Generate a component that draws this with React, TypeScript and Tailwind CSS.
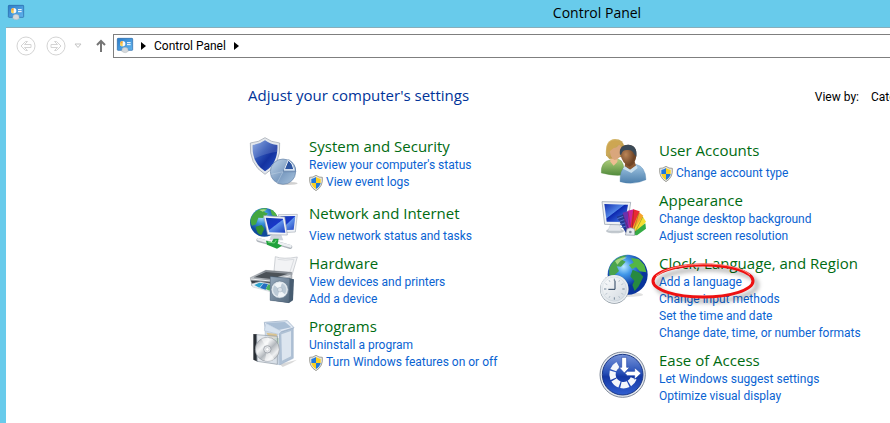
import type { ReactNode } from "react";

const iconClass = "size-12 shrink-0 overflow-visible -mb-1";

const ShieldIcon = () => (
  <svg viewBox="0 0 42 48" className="h-4 w-[14px] shrink-0" aria-hidden="true">
    <path d="M21 1 Q30 8 40 7 Q43 34 21 47 Q-1 34 2 7 Q12 8 21 1Z" fill="#e9e9e3" stroke="#77776f" strokeWidth="2" />
    <path d="M21 6 Q14 11 7 12 L7 24 H21Z" fill="#1f78dc" />
    <path d="M21 6 Q28 11 35 12 L35 24 H21Z" fill="#f9cf22" />
    <path d="M7 24 H21 V42 Q9 35 7 24Z" fill="#f9cf22" />
    <path d="M35 24 H21 V42 Q33 35 35 24Z" fill="#1f78dc" />
  </svg>
);

const PanelIcon = () => (
  <svg viewBox="0 0 48 48" className="size-4 shrink-0 overflow-visible" aria-hidden="true">
    <defs>
      <linearGradient id="panel" x1="0" y1="0" x2="1" y2="1">
        <stop offset="0" stopColor="#2b7cc9" />
        <stop offset="1" stopColor="#62b5ee" />
      </linearGradient>
    </defs>
    <rect x="1" y="1" width="46" height="36" rx="2" fill="url(#panel)" stroke="#2463a4" strokeWidth="2" />
    <circle cx="17" cy="17" r="8" fill="#f6f8fa" />
    <path d="M17 17 V9 A8 8 0 0 0 9 17Z" fill="#f4a62a" />
    <path d="M17 17 H9 A8 8 0 0 0 17 25Z" fill="#f7d057" />
    <path d="M30 14 H41 M30 20 H41" stroke="#fff" strokeWidth="3" />
    <path d="M16 31 Q24 25 32 31 L34 40 Q25 49 14 40Z" fill="#d5d9dc" stroke="#a4a9ad" strokeWidth="1" />
  </svg>
);

const SecurityIcon = () => (
  <svg viewBox="27 24 144 144" className={iconClass} aria-hidden="true">
    <defs>
      <linearGradient id="sec-shield" x1="0" y1="0" x2="1" y2="1">
        <stop offset="0" stopColor="#7c9ddd" />
        <stop offset="0.4" stopColor="#2a50b4" />
        <stop offset="0.6" stopColor="#1432a0" />
        <stop offset="1" stopColor="#2a56c6" />
      </linearGradient>
      <linearGradient id="sec-pie" x1="0" y1="0" x2="1" y2="1">
        <stop offset="0" stopColor="#c5d8ea" />
        <stop offset="0.55" stopColor="#7d9dc2" />
        <stop offset="1" stopColor="#a9c5df" />
      </linearGradient>
    </defs>
    <ellipse cx="142" cy="163" rx="31" ry="5" fill="#000" opacity="0.18" />
    <path d="M75 26 Q93 40 119 42 Q124 106 75 136 Q26 106 31 42 Q57 40 75 26Z" fill="#e3e7ec" stroke="#969da8" strokeWidth="2" />
    <path d="M75 34 Q91 46 112 48 Q115 102 75 127 Q35 102 38 48 Q59 46 75 34Z" fill="url(#sec-shield)" />
    <path d="M75 34 Q91 46 112 48 L111 68 Q76 72 39 91 Q36 72 38 48 Q59 46 75 34Z" fill="#fff" opacity="0.14" />
    <circle cx="129" cy="128" r="38" fill="url(#sec-pie)" stroke="#6885a9" strokeWidth="2" />
    <path d="M129 128 L146 92 Q168 105 167 128Z" fill="#a9c0da" stroke="#54749e" strokeWidth="2" />
    <path d="M133 122 L145 93 Q158 103 162 122Z" fill="#2d55a0" stroke="#eef4fa" strokeWidth="3" />
    <path d="M129 128 L112 161 M129 128 L93 136" stroke="#d9e5f0" strokeWidth="1" />
  </svg>
);

const NetworkIcon = () => (
  <svg viewBox="27 18 144 144" className={iconClass} aria-hidden="true">
    <defs>
      <radialGradient id="net-globe" cx="0.4" cy="0.3">
        <stop offset="0" stopColor="#b6e6ff" />
        <stop offset="0.5" stopColor="#3890d8" />
        <stop offset="1" stopColor="#104a9c" />
      </radialGradient>
      <linearGradient id="net-screen" x1="0" y1="0" x2="1" y2="1">
        <stop offset="0" stopColor="#143ab0" />
        <stop offset="0.48" stopColor="#1937c8" />
        <stop offset="0.52" stopColor="#5f92ea" />
        <stop offset="1" stopColor="#1c3ec0" />
      </linearGradient>
    </defs>
    <circle cx="73" cy="85" r="43" fill="url(#net-globe)" />
    <path d="M38 63 Q54 40 82 43 L72 53 L84 59 L68 72 L55 71 L48 91 L36 95 Q26 80 38 63Z" fill="#43a642" />
    <path d="M91 46 Q107 53 112 68 L96 64Z" fill="#51b242" />
    <path d="M47 98 L65 93 L73 104 L64 123 Q50 120 47 98Z" fill="#329133" />
    <path d="M58 48 Q70 44 81 47 L68 53Z" fill="#d5f2a8" opacity="0.7" />
    <path d="M115 62 L172 61 L166 114 L127 116Z" fill="#eef1f5" stroke="#a9b0bb" strokeWidth="2" />
    <path d="M121 67 L166 66 L161 107 L130 109Z" fill="url(#net-screen)" />
    <path d="M94 122 L123 121 L130 139 H88Z" fill="#ced4dc" />
    <path d="M71 65 L134 69 L142 123 L83 122Z" fill="#f2f4f7" stroke="#a0a8b5" strokeWidth="2" />
    <path d="M77 71 L129 74 L136 116 L88 115Z" fill="url(#net-screen)" />
    <path d="M55 138 L91 148 M115 148 L151 159" stroke="#aeb4bb" strokeWidth="12" strokeLinecap="round" />
    <path d="M55 136 L91 146 M115 147 L151 157" stroke="#eceff2" strokeWidth="8" strokeLinecap="round" />
    <path d="M78 140 L95 144 L101 134 L116 134 L113 149 L126 155 L111 164 L81 152Z" fill="#21a13c" />
    <path d="M84 144 L103 147 L109 138" fill="none" stroke="#79dc81" strokeWidth="3" />
  </svg>
);

const HardwareIcon = () => (
  <svg viewBox="27 15 144 144" className={iconClass} aria-hidden="true">
    <defs>
      <linearGradient id="hw-body" x1="0" y1="0" x2="0" y2="1">
        <stop offset="0" stopColor="#777d84" />
        <stop offset="0.5" stopColor="#c3c8cd" />
        <stop offset="1" stopColor="#50565d" />
      </linearGradient>
      <linearGradient id="hw-speaker" x1="0" y1="0" x2="1" y2="1">
        <stop offset="0" stopColor="#97a9bc" />
        <stop offset="1" stopColor="#53687c" />
      </linearGradient>
    </defs>
    <path d="M106 23 Q130 32 172 24 L156 78 L102 66Z" fill="#f2f3f5" stroke="#b9bec4" strokeWidth="2" />
    <path d="M113 31 Q136 36 162 31 L150 68" fill="none" stroke="#dadde1" strokeWidth="3" />
    <path d="M31 86 L77 64 L155 70 L156 88 L91 105 L33 98Z" fill="url(#hw-body)" stroke="#5b6269" strokeWidth="1" />
    <path d="M41 85 L78 69 L144 74 L94 90Z" fill="#4c5258" />
    <path d="M32 90 L91 96 L151 80" fill="none" stroke="#eef0f2" strokeWidth="3" />
    <path d="M34 95 L93 101 L91 122 L35 110Z" fill="#363d45" />
    <path d="M34 104 L61 98 L97 105 L91 128 L38 114Z" fill="#e8edf2" stroke="#aeb5bd" strokeWidth="1" />
    <path d="M43 108 L58 101 L70 103 L58 116Z" fill="#29a2cd" />
    <path d="M60 117 L71 103 L84 105 L77 122Z" fill="#256ec2" />
    <path d="M77 120 L85 106 L93 107 L89 125Z" fill="#48b25c" />
    <path d="M91 82 L149 88 L162 91 L159 154 L147 162 L90 154Z" fill="#475c70" />
    <path d="M91 83 L149 88 L147 161 L90 154Z" fill="url(#hw-speaker)" stroke="#495e72" strokeWidth="1" />
    <circle cx="119" cy="122" r="26" fill="#dfe6ec" stroke="#62778b" strokeWidth="2" />
    <circle cx="119" cy="122" r="20" fill="#bccad6" />
    <path d="M119 122 L103 108 A21 21 0 0 1 126 102Z M119 122 L136 137 A21 21 0 0 1 113 142Z" fill="#f1f5f8" />
    <circle cx="120" cy="122" r="7" fill="#dbe3ea" stroke="#8496a7" strokeWidth="1" />
  </svg>
);

const ProgramsIcon = () => (
  <svg viewBox="27 9 144 144" className={iconClass} aria-hidden="true">
    <defs>
      <linearGradient id="prg-disc" x1="0" y1="0" x2="1" y2="1">
        <stop offset="0" stopColor="#9a9fa5" />
        <stop offset="0.35" stopColor="#f5f6f7" />
        <stop offset="0.55" stopColor="#b3b8bd" />
        <stop offset="0.75" stopColor="#f0f1f2" />
        <stop offset="1" stopColor="#8f959b" />
      </linearGradient>
    </defs>
    <path d="M119 151 L171 137 L155 147 L128 159Z" fill="#000" opacity="0.15" />
    <path d="M75 42 L112 48 L118 152 L76 143Z" fill="#cedae8" stroke="#93a7bd" strokeWidth="1" />
    <path d="M117 55 L160 42 L160 133 L119 153Z" fill="#afc1d5" stroke="#8199b5" strokeWidth="1" />
    <path d="M73 25 L142 20 L162 41 L117 55 L76 48Z" fill="#e2eaf4" stroke="#8fa5be" strokeWidth="2" />
    <path d="M76 26 L135 24 L154 40 L116 48Z" fill="#a9bed5" />
    <path d="M78 28 L125 52 L116 61 L73 50Z" fill="#d7e3f0" stroke="#9db1c7" strokeWidth="1" />
    <path d="M124 61 L153 51 V127 L126 140Z" fill="#dce5ef" />
    <path d="M79 56 L110 60 L115 88 L97 87Z" fill="#d9c391" />
    <path d="M103 71 L115 72 V103 L103 105Z" fill="#8ab68f" />
    <path d="M40 60 L51 61 L53 143 L40 137Z" fill="#292e34" />
    <path d="M50 62 L112 67 L112 151 L51 142Z" fill="#dce2e8" fillOpacity="0.75" stroke="#8e98a3" strokeWidth="2" />
    <circle cx="82" cy="106" r="36" fill="url(#prg-disc)" stroke="#9298a0" strokeWidth="2" />
    <path d="M82 106 L64 75 A36 36 0 0 1 88 71Z M82 106 L103 136 A36 36 0 0 1 74 140Z" fill="#fff" opacity="0.55" />
    <circle cx="82" cy="106" r="11" fill="#e6e8eb" stroke="#8a9097" strokeWidth="2" />
    <circle cx="82" cy="106" r="5" fill="#fff" stroke="#a1a7ad" strokeWidth="1" />
  </svg>
);

const UsersIcon = () => (
  <svg viewBox="27 24 144 144" className={iconClass} aria-hidden="true">
    <defs>
      <linearGradient id="usr-green" x1="0" y1="0" x2="0" y2="1">
        <stop offset="0" stopColor="#b0ce7c" />
        <stop offset="1" stopColor="#528b3c" />
      </linearGradient>
      <linearGradient id="usr-blue" x1="0" y1="0" x2="0" y2="1">
        <stop offset="0" stopColor="#a1c6e3" />
        <stop offset="1" stopColor="#4c7fac" />
      </linearGradient>
      <linearGradient id="usr-hair" x1="0" y1="0" x2="1" y2="1">
        <stop offset="0" stopColor="#e1c579" />
        <stop offset="1" stopColor="#a68132" />
      </linearGradient>
      <radialGradient id="usr-face" cx="0.35" cy="0.45">
        <stop offset="0" stopColor="#bb8557" />
        <stop offset="1" stopColor="#704526" />
      </radialGradient>
    </defs>
    <path d="M34 132 Q31 98 62 92 L86 91 Q104 96 103 138 Q67 142 34 132Z" fill="url(#usr-green)" stroke="#5c9040" strokeWidth="1" />
    <path d="M61 87 H83 L82 99 L71 110 L61 98Z" fill="#edbd91" />
    <path d="M48 79 Q44 31 75 30 Q101 30 104 58 L97 83 L58 90Z" fill="url(#usr-hair)" />
    <path d="M59 57 Q79 60 87 47 Q97 49 94 74 Q87 91 73 93 Q59 86 59 57Z" fill="#d9a67c" />
    <path d="M51 58 Q53 34 74 34 Q94 36 96 49 Q81 43 70 58 Q62 65 51 73Z" fill="#cda652" />
    <path d="M90 158 Q89 123 108 109 L138 106 Q166 112 168 152 Q130 170 90 158Z" fill="url(#usr-blue)" stroke="#5283ae" strokeWidth="1" />
    <path d="M106 98 H134 L138 110 L121 123 L104 112Z" fill="#8b5933" />
    <path d="M104 112 L120 122 L139 109 L143 117 L124 132 L99 119Z" fill="#c9dfed" />
    <path d="M91 75 Q87 47 116 47 Q142 50 139 80 Q137 104 119 113 Q96 104 91 75Z" fill="url(#usr-face)" />
    <path d="M90 78 Q85 49 114 47 Q143 48 139 83 L132 75 Q127 61 112 63 Q97 62 94 76Z" fill="#3b4a57" />
  </svg>
);

const AppearanceIcon = () => (
  <svg viewBox="27 6 144 144" className={iconClass} aria-hidden="true">
    <defs>
      <linearGradient id="app-screen" x1="0" y1="0" x2="1" y2="1">
        <stop offset="0" stopColor="#1431b1" />
        <stop offset="0.43" stopColor="#4f83e6" />
        <stop offset="0.46" stopColor="#0d28b0" />
        <stop offset="1" stopColor="#4b88ef" />
      </linearGradient>
    </defs>
    <ellipse cx="75" cy="126" rx="27" ry="7" fill="#c3c9cf" />
    <path d="M63 103 H88 L94 126 H53Z" fill="#e4e7ec" stroke="#aeb5be" strokeWidth="1" />
    <path d="M36 38 L122 40 L112 108 L44 106Z" fill="#eef1f4" stroke="#8995a4" strokeWidth="2" />
    <path d="M43 45 L114 47 L105 99 L50 98Z" fill="url(#app-screen)" />
    <path d="M80 83 L102 76 L124 130 L111 138Z" fill="#203992" />
    <path d="M82 89 L101 82 M86 98 L105 91 M90 107 L109 100 M94 116 L113 109" stroke="#5275d5" strokeWidth="3" />
    <path d="M98 71 L116 66 L125 128 L113 135Z" fill="#6c31ad" />
    <path d="M113 65 L132 61 L129 125 L117 132Z" fill="#cb239b" />
    <path d="M130 61 L149 67 L133 124 L119 131Z" fill="#ea2934" />
    <path d="M147 70 L160 80 L136 128 L121 133Z" fill="#f7a22b" />
    <path d="M158 82 L168 98 L139 134 L122 135Z" fill="#f4df31" />
    <path d="M166 103 L168 119 L141 139 L122 138Z" fill="#35ac44" />
    <path d="M98 76 L119 128 M114 68 L123 126 M131 64 L126 126 M147 71 L130 127 M158 84 L134 132" stroke="#222" strokeOpacity="0.45" strokeWidth="2" />
    <path d="M111 120 Q123 112 134 121 L134 139 L106 138Z" fill="#e5e9ee" stroke="#8d96a4" strokeWidth="2" />
    <circle cx="121" cy="129" r="4" fill="#7d8796" />
  </svg>
);

const ClockIcon = () => (
  <svg viewBox="27 15 144 144" className={iconClass} aria-hidden="true">
    <defs>
      <radialGradient id="clk-globe" cx="0.4" cy="0.3">
        <stop offset="0" stopColor="#b9e8ff" />
        <stop offset="0.4" stopColor="#4298e9" />
        <stop offset="1" stopColor="#09349c" />
      </radialGradient>
      <linearGradient id="clk-face" x1="0" y1="0" x2="1" y2="1">
        <stop offset="0" stopColor="#fff" />
        <stop offset="1" stopColor="#cfd7de" />
      </linearGradient>
    </defs>
    <ellipse cx="111" cy="137" rx="48" ry="7" fill="#000" opacity="0.12" />
    <circle cx="113" cy="77" r="60" fill="url(#clk-globe)" />
    <path d="M58 57 Q73 22 111 18 L96 32 L107 38 L93 53 L80 52 L87 66 L70 82 L58 79Z" fill="#4aa44c" />
    <path d="M123 27 L146 30 L163 48 L169 70 L149 67 L138 54 L126 60 L117 48 L131 41Z" fill="#54b743" />
    <path d="M128 62 L149 71 L160 83 L146 112 L134 126 L127 108 L133 96 L121 82Z" fill="#278a40" />
    <path d="M75 36 Q98 21 111 26 L92 35 L82 47Z" fill="#d5f2a0" opacity="0.65" />
    <circle cx="73" cy="121" r="43" fill="#8a959f" />
    <circle cx="73" cy="120" r="40" fill="url(#clk-face)" stroke="#e8edf1" strokeWidth="4" />
    <circle cx="73" cy="120" r="36" fill="none" stroke="#b7c1ca" strokeWidth="1" />
    <path d="M73 89 V96 M73 145 V152 M42 120 H49 M97 120 H104" stroke="#758799" strokeWidth="3" />
    <path d="M57 93 L60 99 M89 93 L86 99 M46 104 L52 107 M100 104 L94 107 M46 136 L52 133 M100 136 L94 133 M57 147 L60 141 M89 147 L86 141" stroke="#a3b0bc" strokeWidth="2" />
    <path d="M75 95 V121 H55" fill="none" stroke="#263f5c" strokeWidth="3" />
  </svg>
);

const EaseIcon = () => (
  <svg viewBox="27 21 144 144" className={iconClass} aria-hidden="true">
    <defs>
      <linearGradient id="ease-disc" x1="0" y1="0" x2="0" y2="1">
        <stop offset="0" stopColor="#7793d8" />
        <stop offset="0.45" stopColor="#2851b8" />
        <stop offset="0.55" stopColor="#1438a4" />
        <stop offset="1" stopColor="#315fd0" />
      </linearGradient>
    </defs>
    <circle cx="98" cy="92" r="68" fill="#e4e8ee" stroke="#7f899a" strokeWidth="3" />
    <circle cx="98" cy="92" r="61" fill="url(#ease-disc)" stroke="#1c3986" strokeWidth="3" />
    <path d="M84 62 A33 33 0 1 0 131 103" fill="none" stroke="#f4f7fb" strokeWidth="19" strokeDasharray="22 4" />
    <path d="M95 40 H110 V70 H119 L103 87 L87 70 H95Z" fill="#fff" stroke="#2449aa" strokeWidth="2" />
    <path d="M112 82 H134 V71 L153 88 L134 106 V95 H112 L105 88Z" fill="#fff" stroke="#2449aa" strokeWidth="2" />
  </svg>
);

type Task = { label: string; shield?: boolean; circled?: boolean };

type CategoryProps = { title: string; icon: ReactNode; tasks: Task[] };

const leftColumn: CategoryProps[] = [
  {
    title: "System and Security",
    icon: <SecurityIcon />,
    tasks: [{ label: "Review your computer's status" }, { label: "View event logs", shield: true }],
  },
  {
    title: "Network and Internet",
    icon: <NetworkIcon />,
    tasks: [{ label: "View network status and tasks" }],
  },
  {
    title: "Hardware",
    icon: <HardwareIcon />,
    tasks: [{ label: "View devices and printers" }, { label: "Add a device" }],
  },
  {
    title: "Programs",
    icon: <ProgramsIcon />,
    tasks: [{ label: "Uninstall a program" }, { label: "Turn Windows features on or off", shield: true }],
  },
];

const rightColumn: CategoryProps[] = [
  {
    title: "User Accounts",
    icon: <UsersIcon />,
    tasks: [{ label: "Change account type", shield: true }],
  },
  {
    title: "Appearance",
    icon: <AppearanceIcon />,
    tasks: [{ label: "Change desktop background" }, { label: "Adjust screen resolution" }],
  },
  {
    title: "Clock, Language, and Region",
    icon: <ClockIcon />,
    tasks: [
      { label: "Add a language", circled: true },
      { label: "Change input methods" },
      { label: "Set the time and date" },
      { label: "Change date, time, or number formats" },
    ],
  },
  {
    title: "Ease of Access",
    icon: <EaseIcon />,
    tasks: [{ label: "Let Windows suggest settings" }, { label: "Optimize visual display" }],
  },
];

const RedCircle = () => (
  <svg
    viewBox="0 0 112 44"
    className="pointer-events-none absolute -left-2 -top-3 z-10 h-11 w-28 overflow-visible"
    aria-hidden="true"
  >
    <ellipse cx="56" cy="23" rx="50" ry="16" fill="none" stroke="#000" strokeOpacity="0.3" strokeWidth="4" className="blur-[2px]" />
    <ellipse cx="52" cy="19" rx="50" ry="16" fill="none" stroke="#ee1111" strokeWidth="3" />
    <path d="M5 14 Q18 3 52 2 Q88 2 99 13" fill="none" stroke="#ff8b80" strokeWidth="1" />
  </svg>
);

const Category = ({ title, icon, tasks }: CategoryProps) => {
  const single = tasks.length === 1;

  return (
    <section className="flex items-start gap-3">
      {icon}
      <div className={single ? "pt-1" : ""}>
        <h2 className="font-['Open_Sans','Noto_Sans',sans-serif] text-[15px] leading-[19px] text-[#006b12]">
          <a href="#" className="hover:underline">{title}</a>
        </h2>
        <ul className={single ? "pt-[5px]" : "pt-px"}>
          {tasks.map((task) => (
            <li key={task.label} className="relative flex h-[17px] items-center">
              <a href="#" className="flex items-center gap-[3px] text-xs leading-[17px] text-[#0a63d2] hover:underline">
                {task.shield && <ShieldIcon />}
                {task.label}
              </a>
              {task.circled && <RedCircle />}
            </li>
          ))}
        </ul>
      </div>
    </section>
  );
};

const Crumb = () => (
  <svg viewBox="0 0 5 8" className="h-2 w-[5px] shrink-0" aria-hidden="true">
    <path d="M0 0 L5 4 L0 8Z" fill="#000" />
  </svg>
);

const NavArrow = ({ flip }: { flip?: boolean }) => (
  <svg viewBox="0 0 20 20" className={flip ? "size-5 rotate-180" : "size-5"} fill="none" stroke="#d4d4d4" aria-hidden="true">
    <circle cx="10" cy="10" r="9" />
    <path d="M5 10 L9.5 5.5 H11.5 L8.5 8.5 H15 V11.5 H8.5 L11.5 14.5 H9.5Z" />
  </svg>
);

const Toolbar = () => (
  <nav className="flex h-9 items-center pl-[10px]">
    <button type="button" aria-label="Back" className="mr-[10px]">
      <NavArrow />
    </button>
    <button type="button" aria-label="Forward" className="mr-2">
      <NavArrow flip />
    </button>
    <button type="button" aria-label="Recent locations" className="mr-[14px]">
      <svg viewBox="0 0 8 6" className="h-[6px] w-2" fill="none" stroke="#c4c4c4" aria-hidden="true">
        <path d="M1 1 H7 L4 4.5Z" />
      </svg>
    </button>
    <button type="button" aria-label="Up" className="mr-[7px]">
      <svg viewBox="0 0 10 14" className="h-[14px] w-[10px]" fill="none" stroke="#757575" strokeWidth="2" aria-hidden="true">
        <path d="M5 13 V2 M1 6 L5 2 L9 6" />
      </svg>
    </button>
    <div className="flex h-6 flex-1 items-center gap-2 border border-r-0 border-[#7f7f7f] pl-[3px] text-xs">
      <PanelIcon />
      <Crumb />
      <a href="#" className="text-black">Control Panel</a>
      <Crumb />
    </div>
  </nav>
);

export default function App() {
  return (
    <div className="min-h-screen overflow-hidden whitespace-nowrap bg-[#68cbeb] pl-[6px] font-['Roboto','Open_Sans',sans-serif] text-black">
      <header className="flex h-[27px] items-center pb-px">
        <span className="pl-[2px]">
          <PanelIcon />
        </span>
        {/* the window runs on past the right edge, so its title sits right of centre */}
        <span className="flex-1 pl-[280px] text-center font-['Open_Sans','Noto_Sans',sans-serif] text-sm leading-[22px]">
          Control Panel
        </span>
      </header>

      <div className="min-h-[calc(100vh-27px)] border-t border-[#88aebb] bg-white">
        <Toolbar />
        <main className="pl-[242px]">
          <div className="flex items-center justify-between pt-5">
            <h1 className="font-['Open_Sans','Noto_Sans',sans-serif] text-[15px] leading-[22px] text-[#003399]">
              Adjust your computer's settings
            </h1>
            <div className="-mr-10 flex items-center gap-3 pt-1 text-xs leading-[18px]">
              <label htmlFor="view-by">View by:</label>
              <select id="view-by" className="w-[59px] appearance-none bg-transparent">
                <option>Category</option>
                <option>Large icons</option>
                <option>Small icons</option>
              </select>
            </div>
          </div>

          <div className="grid grid-cols-[350px_1fr] pl-px pt-[31px]">
            <div className="flex flex-col gap-[9px]">
              {leftColumn.map((category) => (
                <Category key={category.title} {...category} />
              ))}
            </div>
            <div className="flex flex-col gap-[9px]">
              {rightColumn.map((category) => (
                <Category key={category.title} {...category} />
              ))}
            </div>
          </div>
        </main>
      </div>
    </div>
  );
}
